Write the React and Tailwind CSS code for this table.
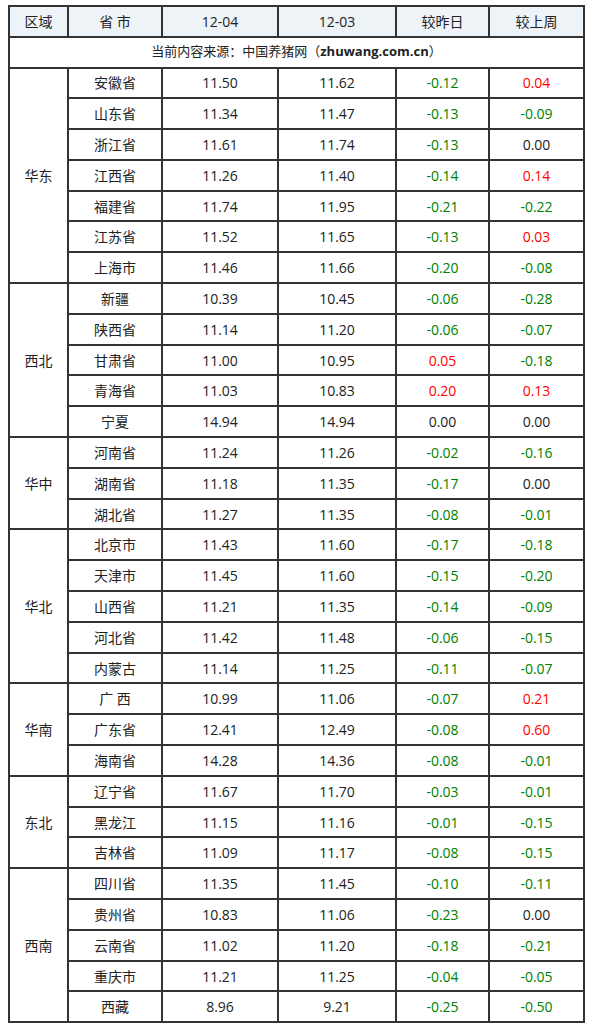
const groups = [
  ['华东', [
    ['安徽省', '11.50', '11.62', '-0.12', '0.04'],
    ['山东省', '11.34', '11.47', '-0.13', '-0.09'],
    ['浙江省', '11.61', '11.74', '-0.13', '0.00'],
    ['江西省', '11.26', '11.40', '-0.14', '0.14'],
    ['福建省', '11.74', '11.95', '-0.21', '-0.22'],
    ['江苏省', '11.52', '11.65', '-0.13', '0.03'],
    ['上海市', '11.46', '11.66', '-0.20', '-0.08'],
  ]],
  ['西北', [
    ['新疆', '10.39', '10.45', '-0.06', '-0.28'],
    ['陕西省', '11.14', '11.20', '-0.06', '-0.07'],
    ['甘肃省', '11.00', '10.95', '0.05', '-0.18'],
    ['青海省', '11.03', '10.83', '0.20', '0.13'],
    ['宁夏', '14.94', '14.94', '0.00', '0.00'],
  ]],
  ['华中', [
    ['河南省', '11.24', '11.26', '-0.02', '-0.16'],
    ['湖南省', '11.18', '11.35', '-0.17', '0.00'],
    ['湖北省', '11.27', '11.35', '-0.08', '-0.01'],
  ]],
  ['华北', [
    ['北京市', '11.43', '11.60', '-0.17', '-0.18'],
    ['天津市', '11.45', '11.60', '-0.15', '-0.20'],
    ['山西省', '11.21', '11.35', '-0.14', '-0.09'],
    ['河北省', '11.42', '11.48', '-0.06', '-0.15'],
    ['内蒙古', '11.14', '11.25', '-0.11', '-0.07'],
  ]],
  ['华南', [
    ['广 西', '10.99', '11.06', '-0.07', '0.21'],
    ['广东省', '12.41', '12.49', '-0.08', '0.60'],
    ['海南省', '14.28', '14.36', '-0.08', '-0.01'],
  ]],
  ['东北', [
    ['辽宁省', '11.67', '11.70', '-0.03', '-0.01'],
    ['黑龙江', '11.15', '11.16', '-0.01', '-0.15'],
    ['吉林省', '11.09', '11.17', '-0.08', '-0.15'],
  ]],
  ['西南', [
    ['四川省', '11.35', '11.45', '-0.10', '-0.11'],
    ['贵州省', '10.83', '11.06', '-0.23', '0.00'],
    ['云南省', '11.02', '11.20', '-0.18', '-0.21'],
    ['重庆市', '11.21', '11.25', '-0.04', '-0.05'],
    ['西藏', '8.96', '9.21', '-0.25', '-0.50'],
  ]],
];

function tone(v) {
  const n = parseFloat(v);
  if (n < 0) return 'text-[#008000]';
  if (n > 0) return 'text-[#ff0000]';
  return 'text-[#222]';
}

const cell = 'border-2 border-[#333] text-center p-0';

export default function App() {
  return (
    <div
      className="bg-white pl-2 pt-[5px] text-[14px] text-[#222]"
      style={{ fontFamily: '"Open Sans", "Noto Sans CJK SC", sans-serif' }}
    >
      <table className="border-collapse w-[575px] table-fixed">
        <colgroup>
          <col className="w-[59px]" />
          <col className="w-[94px]" />
          <col className="w-[116px]" />
          <col className="w-[118px]" />
          <col className="w-[93px]" />
          <col className="w-[95px]" />
        </colgroup>
        <thead>
          <tr className="h-[30.5px] bg-[#eef3f8]">
            <th className={`${cell} font-normal`}>区域</th>
            <th className={`${cell} font-normal`}>省 市</th>
            <th className={`${cell} font-normal`}>12-04</th>
            <th className={`${cell} font-normal`}>12-03</th>
            <th className={`${cell} font-normal`}>较昨日</th>
            <th className={`${cell} font-normal`}>较上周</th>
          </tr>
        </thead>
        <tbody>
          <tr className="h-[31px]">
            <td colSpan={6} className={`${cell} text-[13px]`}>
              当前内容来源：中国养猪网（<span className="font-bold">zhuwang.com.cn</span>）
            </td>
          </tr>
          {groups.map(([region, rows]) =>
            rows.map((r, i) => (
              <tr key={region + r[0]} className="h-[30.8px]">
                {i === 0 && (
                  <td rowSpan={rows.length} className={cell}>{region}</td>
                )}
                <td className={cell}>{r[0]}</td>
                <td className={cell}>{r[1]}</td>
                <td className={cell}>{r[2]}</td>
                <td className={`${cell} ${tone(r[3])}`}>{r[3]}</td>
                <td className={`${cell} ${tone(r[4])}`}>{r[4]}</td>
              </tr>
            ))
          )}
        </tbody>
      </table>
    </div>
  );
}
